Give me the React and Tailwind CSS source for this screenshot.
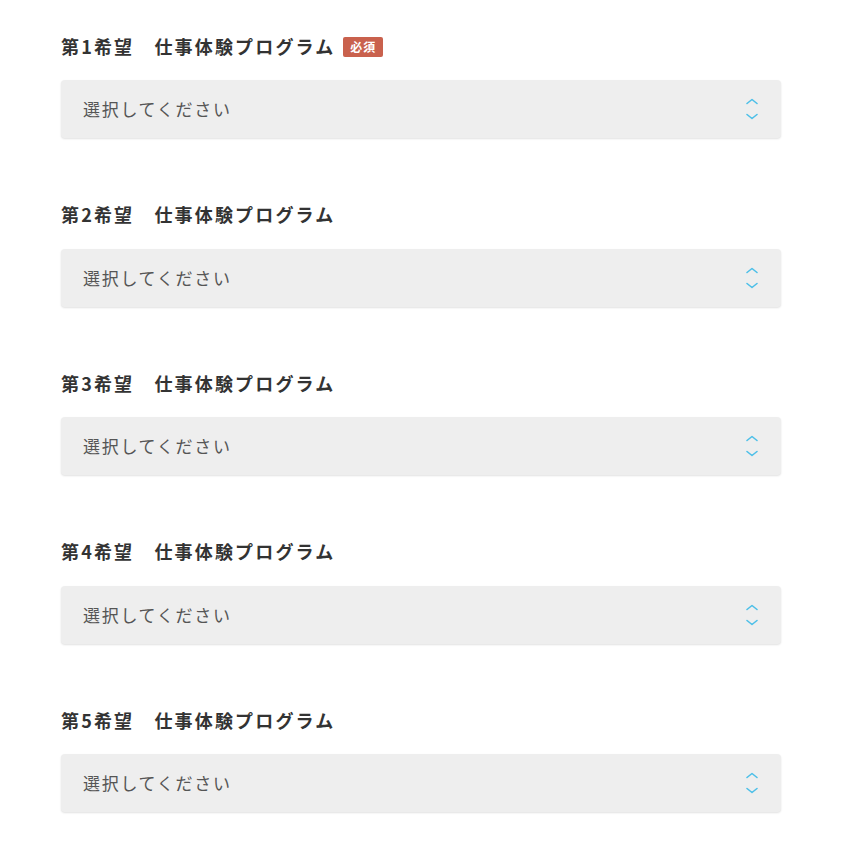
const choices = [1, 2, 3, 4, 5]

function Chevrons() {
  return (
    <svg className="w-[14px] h-[24px]" viewBox="0 0 14 24" fill="none">
      <path d="M2 6.5l5-4 5 4" stroke="#4cbfe8" strokeWidth="1.6" strokeLinecap="round" strokeLinejoin="round" />
      <path d="M2 17.5l5 4 5-4" stroke="#4cbfe8" strokeWidth="1.6" strokeLinecap="round" strokeLinejoin="round" />
    </svg>
  )
}

export default function App() {
  return (
    <div className="min-h-screen bg-white px-[61px] pt-[32px]"
         style={{ fontFamily: '"Noto Sans CJK JP", "Noto Sans", sans-serif' }}>
      {choices.map(n => (
        <div key={n} className="mb-[62.5px] w-[720px]">
          {/* ラベル */}
          <div className="flex items-center gap-[8px] mb-5 h-[28px]">
            <span className="text-[18px] font-bold text-[#333] tracking-[0.12em]">
              第{n}希望　仕事体験プログラム
            </span>
            {n === 1 && (
              <span className="mt-[2px] px-[7px] h-[20px] leading-[20px] rounded-[2px] bg-[#c9614d] text-white text-[12px] font-bold tracking-[0.08em]">
                必須
              </span>
            )}
          </div>

          {/* セレクト */}
          <div className="h-[58px] rounded-[4px] bg-[#eeeeee] shadow-[0_1px_2px_rgba(0,0,0,0.12)] flex items-center justify-between pl-[22px] pr-[22px]">
            <span className="text-[17px] text-[#555] tracking-[0.1em]">選択してください</span>
            <Chevrons />
          </div>
        </div>
      ))}
    </div>
  )
}
